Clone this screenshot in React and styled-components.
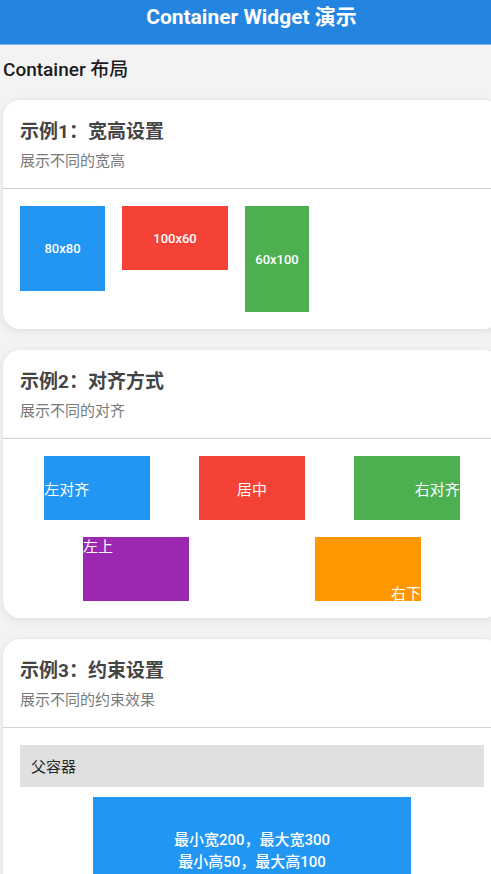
import React from "react";
import styled, { createGlobalStyle, css } from "styled-components";

const Global = createGlobalStyle`
  html, body {
    margin: 0;
    padding: 0;
    background: #f3f3f3;
    overflow: hidden;
    font-family: Roboto, "Noto Sans CJK SC", sans-serif;
  }
`;

const Page = styled.div`
  width: 503px;
`;

const AppBar = styled.header`
  height: 44px;
  background: #2385e0;
  border-bottom: 1px solid #7db8ee;
  display: flex;
  justify-content: center;
  align-items: flex-start;
`;

const AppTitle = styled.h1`
  margin: 0;
  line-height: 34px;
  font-size: 21px;
  font-weight: 700;
  color: #ffffff;
  font-family: Roboto, "Noto Sans CJK SC", sans-serif;
`;

const Body = styled.main`
  padding: 12px 0 0 3px;
  display: flex;
  flex-direction: column;
  width: 498px;
`;

const Heading = styled.h2`
  margin: 0 0 17px;
  font-size: 19px;
  line-height: 26px;
  font-weight: 500;
  color: #1d1b20;
`;

const Card = styled.section`
  width: 498px;
  background: #ffffff;
  border-radius: 17px;
  box-shadow: 0 2px 8px rgba(0, 0, 0, 0.09), 0 0 2px rgba(0, 0, 0, 0.04);
  margin-bottom: 21px;
  flex-shrink: 0;
`;

const CardHeader = styled.div`
  padding: 17px 17px 17px;
  border-bottom: 1px solid #d3cfdb;
  display: flex;
  flex-direction: column;
  gap: 4px;
`;

const CardTitle = styled.div`
  font-size: 19px;
  line-height: 30px;
  font-weight: 700;
  color: #444444;
`;

const CardSub = styled.div`
  font-size: 15px;
  line-height: 20px;
  color: #7a7a7a;
`;

const CardContent = styled.div`
  padding: 17px;
  display: flex;
  flex-direction: column;
  gap: ${(p) => p.$gap || 0}px;
`;

const SizeRow = styled.div`
  display: flex;
  align-items: flex-start;
  gap: 17px;
`;

const SizeBox = styled.div`
  width: ${(p) => p.$w}px;
  height: ${(p) => p.$h}px;
  background: ${(p) => p.$bg};
  display: flex;
  align-items: center;
  justify-content: center;
  color: #fff;
  font-size: 13px;
  font-weight: 500;
`;

const AlignRow = styled.div`
  display: flex;
  justify-content: space-around;
`;

const alignMap = {
  left: css`align-items: center; justify-content: flex-start;`,
  center: css`align-items: center; justify-content: center;`,
  right: css`align-items: center; justify-content: flex-end;`,
  topLeft: css`align-items: flex-start; justify-content: flex-start;`,
  bottomRight: css`align-items: flex-end; justify-content: flex-end;`,
};

const AlignBox = styled.div`
  width: 106px;
  height: 64px;
  background: ${(p) => p.$bg};
  display: flex;
  ${(p) => alignMap[p.$align]}
  color: #fff;
  font-size: 15px;
  line-height: 17px;
  font-family: "Noto Sans CJK SC", sans-serif;
`;

const ParentBox = styled.div`
  background: #e0e0e0;
  padding: 10px 11px;
  font-size: 15px;
  line-height: 22px;
  color: #2a2a2a;
  font-family: "Noto Sans CJK SC", sans-serif;
`;

const ConstrainedBox = styled.div`
  margin: 10px auto 0;
  width: 318px;
  height: 106px;
  background: #2196f3;
  color: #fff;
  display: flex;
  flex-direction: column;
  justify-content: center;
  align-items: center;
  padding-top: 2px;
  box-sizing: border-box;
  font-size: 15px;
  line-height: 22px;
  font-weight: 500;
`;

function CardShell({ title, sub, gap, children }) {
  return (
    <Card>
      <CardHeader>
        <CardTitle>{title}</CardTitle>
        <CardSub>{sub}</CardSub>
      </CardHeader>
      <CardContent $gap={gap}>{children}</CardContent>
    </Card>
  );
}

export default function App() {
  return (
    <Page>
      <Global />
      <AppBar>
        <AppTitle>Container Widget 演示</AppTitle>
      </AppBar>
      <Body>
        <Heading>Container 布局</Heading>
        <CardShell title="示例1：宽高设置" sub="展示不同的宽高">
          <SizeRow>
            <SizeBox $w={85} $h={85} $bg="#2196f3">80x80</SizeBox>
            <SizeBox $w={106} $h={64} $bg="#f44336">100x60</SizeBox>
            <SizeBox $w={64} $h={106} $bg="#4caf50">60x100</SizeBox>
          </SizeRow>
        </CardShell>
        <CardShell title="示例2：对齐方式" sub="展示不同的对齐" gap={17}>
          <AlignRow>
            <AlignBox $bg="#2196f3" $align="left">左对齐</AlignBox>
            <AlignBox $bg="#f44336" $align="center">居中</AlignBox>
            <AlignBox $bg="#4caf50" $align="right">右对齐</AlignBox>
          </AlignRow>
          <AlignRow>
            <AlignBox $bg="#9c27b0" $align="topLeft">左上</AlignBox>
            <AlignBox $bg="#ff9800" $align="bottomRight">右下</AlignBox>
          </AlignRow>
        </CardShell>
        <CardShell title="示例3：约束设置" sub="展示不同的约束效果">
          <ParentBox>父容器</ParentBox>
          <ConstrainedBox>
            <div>最小宽200，最大宽300</div>
            <div>最小高50，最大高100</div>
          </ConstrainedBox>
        </CardShell>
      </Body>
    </Page>
  );
}
